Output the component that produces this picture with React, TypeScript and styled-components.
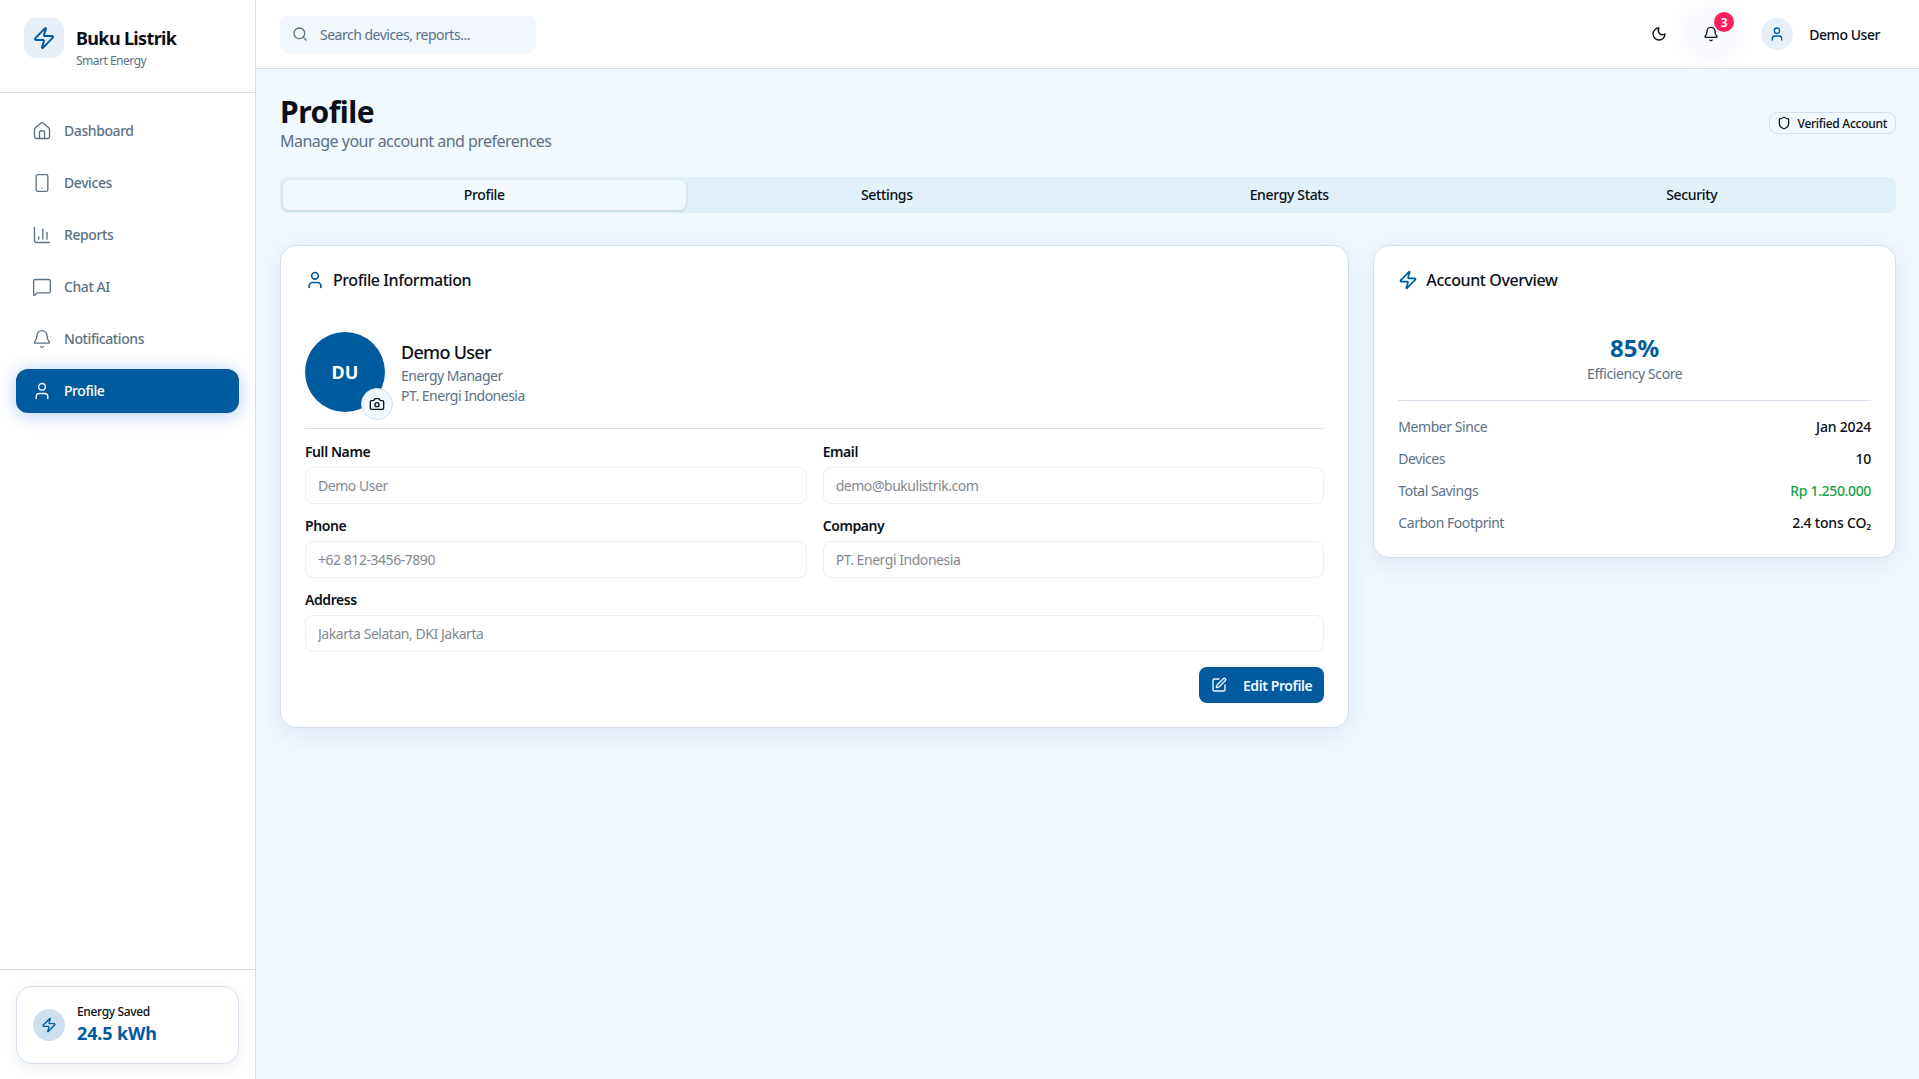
import styled, { createGlobalStyle } from 'styled-components';
import { Bell, Camera, ChartColumn, House, MessageSquare, Moon, Search, Shield, Smartphone, SquarePen, User, Zap } from 'lucide-react';

const primary = '#005a9e';
const ink = '#0a0f18';
const muted = '#5b7186';
const line = '#d3e0ec';

const GlobalStyle = createGlobalStyle`
  * { box-sizing: border-box; }
  html, body { margin: 0; padding: 0; height: 100%; }
  body { font-family: "Noto Sans", "Open Sans", sans-serif; color: ${ink}; background: #f1f8fe; }
`;

const Shell = styled.div`
  display: flex;
  height: 100vh;
  overflow: hidden;
`;

const Sidebar = styled.aside`
  width: 256px;
  flex: none;
  display: flex;
  flex-direction: column;
  background: #fff;
  border-right: 1px solid ${line};
`;

const Brand = styled.div`
  height: 93px;
  padding: 18px 24px 0;
  display: flex;
  gap: 12px;
  border-bottom: 1px solid ${line};
`;

const BrandIcon = styled.div`
  width: 40px;
  height: 40px;
  border-radius: 12px;
  background: #e7f0f8;
  color: ${primary};
  display: flex;
  align-items: center;
  justify-content: center;
`;

const BrandText = styled.div`
  padding-top: 9px;
`;

const BrandName = styled.div`
  font-size: 18px;
  line-height: 22px;
  font-weight: 700;
  letter-spacing: -0.65px;
  margin-bottom: 4px;
`;

const BrandSub = styled.div`
  font-size: 12px;
  line-height: 16px;
  color: ${muted};
  letter-spacing: -0.5px;
`;

const Nav = styled.nav`
  flex: 1;
  padding: 16px;
  display: flex;
  flex-direction: column;
  gap: 8px;
`;

const NavItem = styled.a<{ $active?: boolean }>`
  height: 44px;
  padding: 0 16px 1px;
  display: flex;
  align-items: center;
  gap: 12px;
  border-radius: 12px;
  font-size: 14px;
  font-weight: 500;
  letter-spacing: -0.42px;
  color: ${(p) => (p.$active ? '#fff' : muted)};
  background: ${(p) => (p.$active ? primary : 'transparent')};
  box-shadow: ${(p) => (p.$active ? '0 2px 18px rgba(0, 90, 240, 0.3)' : 'none')};
`;

const SideFooter = styled.div`
  height: 110px;
  padding: 16px;
  border-top: 1px solid ${line};
`;

const SavedCard = styled.div`
  height: 78px;
  padding: 0 16px;
  display: flex;
  align-items: center;
  gap: 12px;
  background: #fff;
  border: 1px solid ${line};
  border-radius: 16px;
  box-shadow: 0 4px 14px rgba(20, 60, 100, 0.08);
`;

const SavedIcon = styled.div`
  width: 32px;
  height: 32px;
  border-radius: 50%;
  background: #cddfee;
  color: ${primary};
  display: flex;
  align-items: center;
  justify-content: center;
`;

const SavedLabel = styled.div`
  font-size: 12px;
  line-height: 16px;
  font-weight: 500;
  letter-spacing: -0.35px;
  margin-top: -1px;
  margin-bottom: 1px;
`;

const SavedValue = styled.div`
  font-size: 18px;
  line-height: 24px;
  font-weight: 700;
  letter-spacing: -0.15px;
  color: ${primary};
`;

const Column = styled.div`
  flex: 1;
  min-width: 0;
  display: flex;
  flex-direction: column;
`;

const TopBar = styled.header`
  height: 69px;
  padding: 0 24px;
  display: flex;
  align-items: center;
  justify-content: space-between;
  background: #fff;
  border-bottom: 1px solid ${line};
`;

const SearchBox = styled.div`
  width: 256px;
  height: 37px;
  padding: 0 12px;
  display: flex;
  align-items: center;
  gap: 12px;
  border-radius: 8px;
  background: #f1f7fd;
  color: ${muted};
  font-size: 14px;
  letter-spacing: -0.5px;
`;

const TopActions = styled.div`
  display: flex;
  align-items: center;
`;

const IconButton = styled.div<{ $glow?: boolean }>`
  position: relative;
  width: 40px;
  height: 40px;
  margin-left: 12px;
  display: flex;
  align-items: center;
  justify-content: center;
  border-radius: 50%;
  box-shadow: ${(p) => (p.$glow ? '0 0 26px rgba(40, 90, 220, 0.1)' : 'none')};
  background: ${(p) => (p.$glow ? 'rgba(40, 90, 220, 0.03)' : 'transparent')};
`;

const Badge = styled.span`
  position: absolute;
  top: -2px;
  right: -3px;
  width: 20px;
  height: 20px;
  border-radius: 50%;
  background: #fb1d5c;
  color: #fff;
  font-size: 12px;
  font-weight: 600;
  display: flex;
  align-items: center;
  justify-content: center;
`;

const UserChip = styled.div`
  margin-left: 30px;
  margin-right: 15px;
  display: flex;
  align-items: center;
  gap: 16px;
  font-size: 14px;
  font-weight: 500;
  letter-spacing: -0.45px;
`;

const UserIcon = styled.div`
  width: 32px;
  height: 32px;
  border-radius: 50%;
  background: #e7f0f8;
  color: ${primary};
  display: flex;
  align-items: center;
  justify-content: center;
`;

const Main = styled.main`
  flex: 1;
  padding: 24px 23px 24px 24px;
`;

const PageHead = styled.div`
  display: flex;
  align-items: center;
  justify-content: space-between;
  height: 60px;
  margin-bottom: 24px;
`;

const PageTitle = styled.h1`
  margin: 1px 0 0;
  font-size: 30px;
  line-height: 36px;
  font-weight: 700;
  letter-spacing: -0.5px;
`;

const PageSub = styled.p`
  margin: 0;
  font-size: 16px;
  line-height: 23px;
  color: ${muted};
  letter-spacing: -0.52px;
`;

const VerifiedTag = styled.div`
  height: 22px;
  padding: 0 8px 0 7px;
  display: flex;
  align-items: center;
  gap: 7px;
  border: 1px solid ${line};
  border-radius: 8px;
  font-size: 12px;
  font-weight: 500;
  letter-spacing: -0.28px;
`;

const TabList = styled.div`
  height: 36px;
  padding: 3px;
  display: grid;
  grid-template-columns: repeat(4, 1fr);
  border-radius: 8px;
  background: #e2f0f9;
  margin-bottom: 32px;
`;

const Tab = styled.div<{ $active?: boolean }>`
  padding-bottom: 1px;
  display: flex;
  align-items: center;
  justify-content: center;
  border-radius: 6px;
  font-size: 14px;
  font-weight: 500;
  letter-spacing: -0.35px;
  background: ${(p) => (p.$active ? '#f1f8fe' : 'transparent')};
  box-shadow: ${(p) => (p.$active ? '0 1px 3px rgba(20, 60, 100, 0.2)' : 'none')};
`;

const CardGrid = styled.div`
  display: grid;
  grid-template-columns: repeat(3, 1fr);
  gap: 24px;
  align-items: start;
`;

const Card = styled.section<{ $wide?: boolean }>`
  grid-column: ${(p) => (p.$wide ? 'span 2' : 'span 1')};
  padding: 24px;
  background: #fff;
  border: 1px solid ${line};
  border-radius: 16px;
  box-shadow: 0 6px 24px rgba(20, 60, 130, 0.09);
`;

const CardTitle = styled.h2`
  margin: 0 0 24px;
  height: 20px;
  display: flex;
  align-items: center;
  gap: 8px;
  font-size: 16px;
  font-weight: 500;
  letter-spacing: -0.42px;
  svg { color: ${primary}; }
`;

const ProfileRow = styled.div`
  padding: 18px 0 16px;
  display: flex;
  align-items: center;
  gap: 16px;
  border-bottom: 1px solid ${line};
  margin-bottom: 14px;
`;

const Avatar = styled.div`
  position: relative;
  width: 80px;
  height: 80px;
  flex: none;
  border-radius: 50%;
  background: ${primary};
  color: #fff;
  font-size: 18px;
  font-weight: 700;
  display: flex;
  align-items: center;
  justify-content: center;
`;

const CameraButton = styled.div`
  position: absolute;
  right: -8px;
  bottom: -8px;
  width: 32px;
  height: 32px;
  border-radius: 50%;
  background: #f1f8fe;
  border: 1px solid ${line};
  color: ${ink};
  display: flex;
  align-items: center;
  justify-content: center;
`;

const PersonName = styled.div`
  font-size: 18px;
  line-height: 27px;
  font-weight: 500;
  letter-spacing: -0.7px;
`;

const PersonMeta = styled.div`
  font-size: 14px;
  line-height: 20px;
  color: ${muted};
  letter-spacing: -0.5px;
`;

const FormGrid = styled.div`
  display: grid;
  grid-template-columns: repeat(2, 1fr);
  column-gap: 16px;
  row-gap: 13px;
`;

const Field = styled.label<{ $full?: boolean }>`
  grid-column: ${(p) => (p.$full ? '1 / -1' : 'auto')};
  display: flex;
  flex-direction: column;
  gap: 6px;
  font-size: 14px;
  line-height: 18px;
  font-weight: 600;
  letter-spacing: -0.42px;
`;

const TextInput = styled.input`
  height: 37px;
  width: 100%;
  padding: 0 12px;
  border: 1px solid #e7eef5;
  border-radius: 8px;
  background: #fff;
  font: inherit;
  font-weight: 400;
  letter-spacing: -0.46px;
  color: #84898f;
  &:disabled { color: #84898f; -webkit-text-fill-color: #84898f; opacity: 1; }
`;

const FormActions = styled.div`
  display: flex;
  justify-content: flex-end;
  margin-top: 15px;
`;

const EditButton = styled.button`
  height: 36px;
  padding: 0 12px;
  display: flex;
  align-items: center;
  gap: 16px;
  border: none;
  border-radius: 8px;
  background: ${primary};
  color: #f1f8fe;
  font: inherit;
  font-size: 14px;
  font-weight: 600;
  letter-spacing: -0.4px;
`;

const Score = styled.div`
  padding: 18px 0 16px;
  text-align: center;
  border-bottom: 1px solid ${line};
  margin-bottom: 15px;
`;

const ScoreValue = styled.div`
  font-size: 24px;
  line-height: 32px;
  font-weight: 700;
  color: ${primary};
`;

const ScoreLabel = styled.div`
  font-size: 14px;
  line-height: 20px;
  color: ${muted};
  letter-spacing: -0.4px;
`;

const StatList = styled.div`
  display: flex;
  flex-direction: column;
  gap: 12px;
  margin-bottom: 1px;
`;

const StatRow = styled.div`
  height: 20px;
  display: flex;
  align-items: center;
  justify-content: space-between;
  font-size: 14px;
  letter-spacing: -0.45px;
`;

const StatLabel = styled.span`
  color: ${muted};
`;

const StatValue = styled.span<{ $good?: boolean }>`
  font-weight: 500;
  letter-spacing: ${(p) => (p.$good ? '-0.35px' : '-0.2px')};
  color: ${(p) => (p.$good ? '#16a34a' : ink)};
`;

const navItems = [
  { label: 'Dashboard', icon: House },
  { label: 'Devices', icon: Smartphone },
  { label: 'Reports', icon: ChartColumn },
  { label: 'Chat AI', icon: MessageSquare },
  { label: 'Notifications', icon: Bell },
  { label: 'Profile', icon: User, active: true },
];

const tabs = ['Profile', 'Settings', 'Energy Stats', 'Security'];

export default function App() {
  return (
    <Shell>
      <GlobalStyle />
      <Sidebar>
        <Brand>
          <BrandIcon>
            <Zap size={24} strokeWidth={2} />
          </BrandIcon>
          <BrandText>
            <BrandName>Buku Listrik</BrandName>
            <BrandSub>Smart Energy</BrandSub>
          </BrandText>
        </Brand>
        <Nav>
          {navItems.map((item) => (
            <NavItem key={item.label} $active={item.active}>
              <item.icon size={20} strokeWidth={1.6} />
              {item.label}
            </NavItem>
          ))}
        </Nav>
        <SideFooter>
          <SavedCard>
            <SavedIcon>
              <Zap size={16} />
            </SavedIcon>
            <div>
              <SavedLabel>Energy Saved</SavedLabel>
              <SavedValue>24.5 kWh</SavedValue>
            </div>
          </SavedCard>
        </SideFooter>
      </Sidebar>
      <Column>
        <TopBar>
          <SearchBox>
            <Search size={16} />
            Search devices, reports...
          </SearchBox>
          <TopActions>
            <IconButton>
              <Moon size={16} />
            </IconButton>
            <IconButton $glow>
              <Bell size={16} />
              <Badge>3</Badge>
            </IconButton>
            <UserChip>
              <UserIcon>
                <User size={16} />
              </UserIcon>
              Demo User
            </UserChip>
          </TopActions>
        </TopBar>
        <Main>
          <PageHead>
            <div>
              <PageTitle>Profile</PageTitle>
              <PageSub>Manage your account and preferences</PageSub>
            </div>
            <VerifiedTag>
              <Shield size={14} />
              Verified Account
            </VerifiedTag>
          </PageHead>
          <TabList>
            {tabs.map((tab, i) => (
              <Tab key={tab} $active={i === 0}>
                {tab}
              </Tab>
            ))}
          </TabList>
          <CardGrid>
            <Card $wide>
              <CardTitle>
                <User size={20} />
                Profile Information
              </CardTitle>
              <ProfileRow>
                <Avatar>
                  DU
                  <CameraButton>
                    <Camera size={16} />
                  </CameraButton>
                </Avatar>
                <div>
                  <PersonName>Demo User</PersonName>
                  <PersonMeta>Energy Manager</PersonMeta>
                  <PersonMeta>PT. Energi Indonesia</PersonMeta>
                </div>
              </ProfileRow>
              <FormGrid>
                <Field>
                  Full Name
                  <TextInput disabled defaultValue="Demo User" />
                </Field>
                <Field>
                  Email
                  <TextInput disabled defaultValue="demo@bukulistrik.com" />
                </Field>
                <Field>
                  Phone
                  <TextInput disabled defaultValue="+62 812-3456-7890" />
                </Field>
                <Field>
                  Company
                  <TextInput disabled defaultValue="PT. Energi Indonesia" />
                </Field>
                <Field $full>
                  Address
                  <TextInput disabled defaultValue="Jakarta Selatan, DKI Jakarta" />
                </Field>
              </FormGrid>
              <FormActions>
                <EditButton>
                  <SquarePen size={16} />
                  Edit Profile
                </EditButton>
              </FormActions>
            </Card>
            <Card>
              <CardTitle>
                <Zap size={20} />
                Account Overview
              </CardTitle>
              <Score>
                <ScoreValue>85%</ScoreValue>
                <ScoreLabel>Efficiency Score</ScoreLabel>
              </Score>
              <StatList>
                <StatRow>
                  <StatLabel>Member Since</StatLabel>
                  <StatValue>Jan 2024</StatValue>
                </StatRow>
                <StatRow>
                  <StatLabel>Devices</StatLabel>
                  <StatValue>10</StatValue>
                </StatRow>
                <StatRow>
                  <StatLabel>Total Savings</StatLabel>
                  <StatValue $good>Rp 1.250.000</StatValue>
                </StatRow>
                <StatRow>
                  <StatLabel>Carbon Footprint</StatLabel>
                  <StatValue>2.4 tons CO₂</StatValue>
                </StatRow>
              </StatList>
            </Card>
          </CardGrid>
        </Main>
      </Column>
    </Shell>
  );
}
